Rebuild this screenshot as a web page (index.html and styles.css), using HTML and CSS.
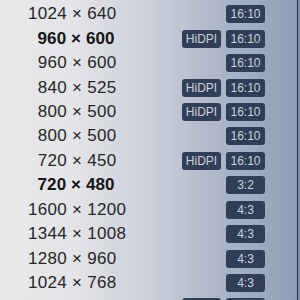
FILE: index.html
```html
<!DOCTYPE html>
<html>
<head>
<meta charset="utf-8">
<link rel="stylesheet" href="styles.css">
</head>
<body>
<div class="panel">
  <div class="list">
    <div class="row"><span class="res">1024 × 640</span><span class="tags"><span class="badge">16:10</span></span></div>
    <div class="row"><span class="res bold">&#8199;960 × 600</span><span class="tags"><span class="badge">HiDPI</span><span class="badge">16:10</span></span></div>
    <div class="row"><span class="res">&#8199;960 × 600</span><span class="tags"><span class="badge">16:10</span></span></div>
    <div class="row"><span class="res">&#8199;840 × 525</span><span class="tags"><span class="badge">HiDPI</span><span class="badge">16:10</span></span></div>
    <div class="row"><span class="res">&#8199;800 × 500</span><span class="tags"><span class="badge">HiDPI</span><span class="badge">16:10</span></span></div>
    <div class="row"><span class="res">&#8199;800 × 500</span><span class="tags"><span class="badge">16:10</span></span></div>
    <div class="row"><span class="res">&#8199;720 × 450</span><span class="tags"><span class="badge">HiDPI</span><span class="badge">16:10</span></span></div>
    <div class="row"><span class="res bold">&#8199;720 × 480</span><span class="tags"><span class="badge">3:2</span></span></div>
    <div class="row"><span class="res">1600 × 1200</span><span class="tags"><span class="badge">4:3</span></span></div>
    <div class="row"><span class="res">1344 × 1008</span><span class="tags"><span class="badge">4:3</span></span></div>
    <div class="row"><span class="res">1280 × 960</span><span class="tags"><span class="badge">4:3</span></span></div>
    <div class="row"><span class="res">1024 × 768</span><span class="tags"><span class="badge">4:3</span></span></div>
    <div class="row"><span class="res"></span><span class="tags"><span class="badge"></span><span class="badge"></span></span></div>
  </div>
</div>
</body>
</html>
```
FILE: styles.css
```css
html, body {
  margin: 0;
  padding: 0;
}
body {
  width: 300px;
  height: 300px;
  overflow: hidden;
}
.panel {
  width: 300px;
  height: 300px;
  overflow: hidden;
  box-sizing: border-box;
  background: linear-gradient(to right, #e9e9eb 0%, #e3e4e7 25%, #cbd0d9 50%, #abb5c8 75%, #8e9cb6 100%);
  border-right: 2px solid #7f8ca6;
  box-shadow: inset -1px 0 0 #2f3a52;
  font-family: "Liberation Sans", Arial, sans-serif;
}
.list {
  padding-top: 2px;
}
.row {
  display: flex;
  align-items: center;
  height: 24.45px;
  padding-left: 28px;
  padding-right: 33px;
}
.res {
  flex: 1;
  font-size: 17px;
  letter-spacing: 0.3px;
  color: #252628;
  white-space: pre;
}
.res.bold {
  font-weight: bold;
  letter-spacing: 0.1px;
  color: #131416;
}
.tags {
  display: flex;
  gap: 5px;
}
.badge {
  width: 39px;
  height: 18px;
  border-radius: 3px;
  background: #313e57;
  color: #cdd1d9;
  font-size: 12px;
  line-height: 18px;
  text-align: center;
}
```
